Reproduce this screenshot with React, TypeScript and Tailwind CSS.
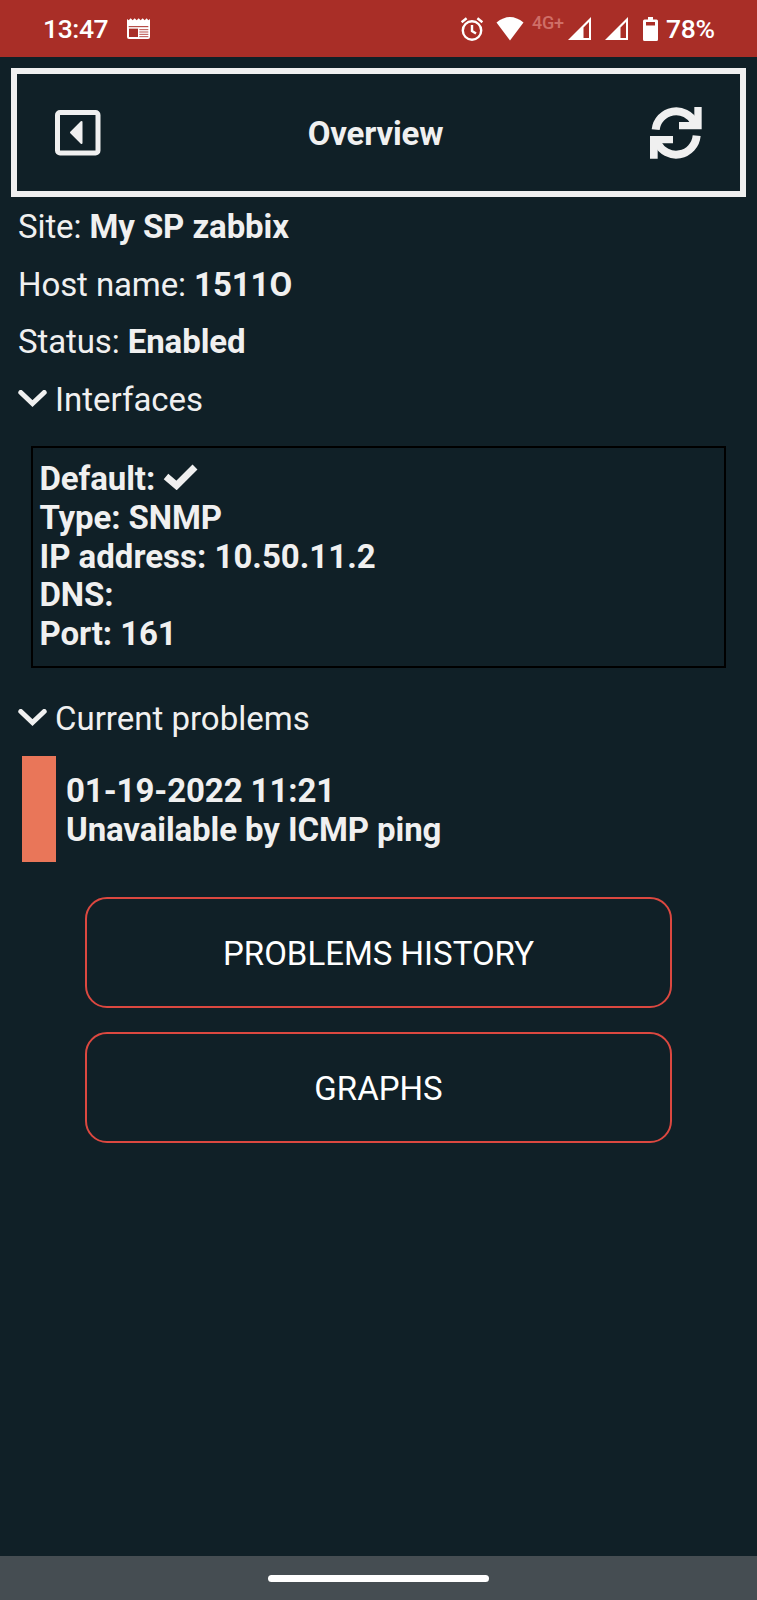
import type { ReactNode } from "react";

function StatusBar() {
  return (
    <header className="flex h-[57px] shrink-0 items-center bg-[#a92e27] pl-[43px] text-[26.500px] font-medium leading-none text-white">
      <span className="w-[84px] pt-px tracking-[-0.4px]">13:47</span>
      <svg className="h-[21px] w-[23px]" viewBox="0 0 69 63" fill="none">
        <path d="M0 3l5 4 6-6 6 6 6-6 6 6 6-6 6 6 6-6 6 6 6-6 5 6 5-4v54q0 6-6 6H6q-6 0-6-6z" fill="#fff" />
        <path d="M5 26h59" stroke="#a92e27" strokeWidth="3" />
        <path d="M6 32h27v25H6z" fill="#a92e27" />
        <path d="M37 35h27M37 42h27M37 49h27M37 56h27" stroke="#a92e27" strokeWidth="2.5" />
      </svg>
      <svg className="ml-[310px] h-6 w-6" viewBox="0 0 24 24" fill="none" stroke="#fff" strokeWidth="2.4">
        <circle cx="12" cy="13.5" r="9.2" />
        <path d="M12 8v6l4 2.6M1.6 5.2l5-4M22.4 5.2l-5-4" />
      </svg>
      <svg className="ml-3 h-6 w-7" viewBox="0 0 28 24">
        <path d="M.5 5.500Q14-5.500 27.500 5.500L14 23.500z" fill="#fff" />
      </svg>
      <span className="ml-[8px] w-9 pb-[11px] text-[18px] tracking-[-0.2px] text-[#cf6e67]">4G+</span>
      <Signal />
      <div className="w-[14px]" />
      <Signal />
      <svg className="ml-[15px] h-6 w-[15px]" viewBox="0 0 15 24">
        <path fillRule="evenodd" d="M5 0h5v2.500h3.500q1.500 0 1.500 1.500v18.500q0 1.500-1.500 1.500h-12Q0 24 0 22.500V4q0-1.500 1.500-1.500H5zM3 5v3.500h9V5z" fill="#fff" />
      </svg>
      <span className="ml-2 pt-px tracking-[-0.3px]">78%</span>
    </header>
  );
}

function Signal() {
  return (
    <svg className="h-[23px] w-[23px]" viewBox="0 0 23 23">
      <path fillRule="evenodd" d="M23 0v23H0zM15.500 10.500V21H21V5z" fill="#fff" />
    </svg>
  );
}

function TitleBar() {
  return (
    <div className="mx-[11px] mt-[11px] flex h-[129px] items-center justify-between border-[6px] border-[#f0f0f0] pl-[38px] pr-[38px]">
      <svg className="h-[46px] w-[46px]" viewBox="0 0 46 46">
        <rect x="2.500" y="2.500" width="40.500" height="40.500" rx="2.500" fill="none" stroke="#f0f0f0" strokeWidth="5" />
        <path d="M16 22.500L26.500 12V33z" fill="#f0f0f0" stroke="#f0f0f0" strokeWidth="2" strokeLinejoin="round" />
      </svg>
      <h1 className="pt-px text-[33px] font-bold leading-none tracking-[-0.15px]">Overview</h1>
      <svg className="h-[52px] w-[52px]" viewBox="150 140 156 156" fill="none">
        <path d="M167 208A62 62 0 0 1 284 187M290 226A62 62 0 0 1 172 247" stroke="#f0f0f0" strokeWidth="24" />
        <path d="M283 139h22v68h-68v-22h35l11-11zM173 295h-23v-68h69v22h-35l-11 11z" fill="#f0f0f0" />
      </svg>
    </div>
  );
}

function Field({ label, value }: { label: string; value: string }) {
  return (
    <p className="h-[57.500px] whitespace-pre leading-[57.500px]">
      {label}: <b>{value}</b>
    </p>
  );
}

function SectionTitle({ children }: { children: ReactNode }) {
  return (
    <h2 className="flex h-[57px] items-center tracking-normal">
      <svg className="mr-[8px] h-[19px] w-[29px]" viewBox="0 0 29 19" fill="none">
        <path d="M2.800 2.500L14.500 13.500L26.200 2.500" stroke="#f0f0f0" strokeWidth="5" strokeLinecap="round" />
      </svg>
      <span className="pt-0.5">{children}</span>
    </h2>
  );
}

function ActionButton({ children }: { children: ReactNode }) {
  return (
    <button className="flex h-[111px] w-[587px] items-center justify-center rounded-[22px] border-2 border-[#dc4840] pt-[3px] text-[33px] tracking-normal text-white">
      {children}
    </button>
  );
}

export default function App() {
  return (
    <div className="flex h-[1600px] w-[757px] flex-col overflow-hidden bg-[#102027] font-['Roboto',sans-serif] text-[33px] tracking-[-0.1px] text-[#f0f0f0]">
      <StatusBar />
      <TitleBar />
      <main className="flex flex-1 flex-col">
        <section className="pl-[18px] pt-px">
          <Field label="Site" value="My SP zabbix" />
          <Field label="Host name" value="1511O" />
          <Field label="Status" value="Enabled" />
          <SectionTitle>Interfaces</SectionTitle>
        </section>
        <section className="ml-[31px] mt-[18px] h-[222px] w-[695px] border-2 border-black pl-[6.500px] pt-[11.500px] font-bold leading-[38.700px]">
          <p className="flex h-[40px] items-center">
            Default:
            <svg className="mb-[4px] ml-[7.500px] h-[26px] w-[35px]" viewBox="0 0 35 26" fill="none">
              <path d="M3 12.500L13.500 21.500L32 3" stroke="#f0f0f0" strokeWidth="7" />
            </svg>
          </p>
          <p>Type: SNMP</p>
          <p className="tracking-normal">IP address: 10.50.11.2</p>
          <p>DNS:</p>
          <p>Port: 161</p>
        </section>
        <section className="mt-[22px] pl-[18px]">
          <SectionTitle>Current problems</SectionTitle>
        </section>
        <section className="ml-[22px] mt-[9px] flex h-[106px] items-center">
          <div className="mr-[10px] h-full w-[34px] bg-[#e97659]" />
          <div className="pt-[5px] font-bold leading-[38.700px]">
            <p>01-19-2022 11:21</p>
            <p>Unavailable by ICMP ping</p>
          </div>
        </section>
        <nav className="mt-[35px] flex flex-col items-center gap-6">
          <ActionButton>PROBLEMS HISTORY</ActionButton>
          <ActionButton>GRAPHS</ActionButton>
        </nav>
      </main>
      <footer className="flex h-11 shrink-0 items-center justify-center bg-[#454d52]">
        <div className="h-[7px] w-[221px] rounded-full bg-white" />
      </footer>
    </div>
  );
}
